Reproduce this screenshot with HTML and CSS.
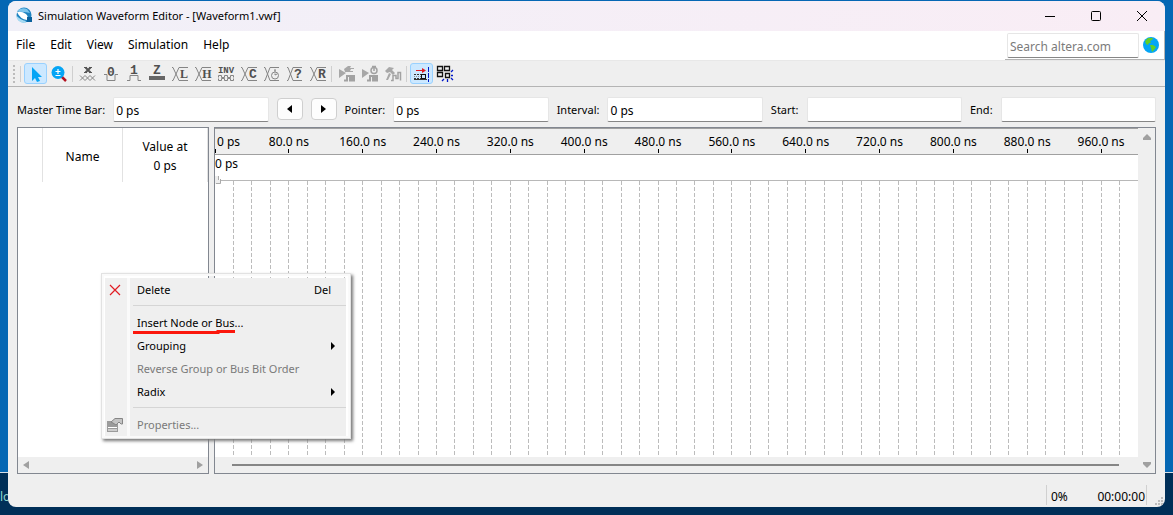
FILE: index.html
```html
<!DOCTYPE html>
<html lang="en">
<head>
<meta charset="utf-8">
<title>Simulation Waveform Editor</title>
<link rel="stylesheet" href="styles.css">
</head>
<body>
<div class="desktop-footer"><span class="desktop-label">lo</span></div>
<main class="window">
  <header class="titlebar">
    <svg class="app-icon" viewBox="0 0 18 18"><circle cx="9" cy="8" r="7.5" fill="#1d82c0"/><path d="M2 4 Q6 0 12 2 L15 6 Q11 5 8 5 Q4 5 2 4Z" fill="#7cc4ec"/><path d="M2 5 Q7 4 11 7 Q14 10 12 13 Q5 12 2 5Z" fill="#fff"/><path d="M1 8 Q5 13 11 14 L10 16 Q2 16 1 8Z" fill="#a6daf3"/><path d="M12 10 L17 10 L17 15 L12 15Z" fill="#0a619d"/></svg>
    <h1 class="title">Simulation Waveform Editor - [Waveform1.vwf]</h1>
    <button class="win-btn" aria-label="Minimize"><svg viewBox="0 0 12 12"><path d="M1 6.500H11"/></svg></button>
    <button class="win-btn" aria-label="Maximize"><svg viewBox="0 0 12 12"><rect x="1.500" y="1.500" width="9" height="9" rx="1"/></svg></button>
    <button class="win-btn" aria-label="Close"><svg viewBox="0 0 12 12"><path d="M1 1L11 11M11 1L1 11"/></svg></button>
  </header>

  <div class="menubar">
    <nav class="menus">
      <button>File</button><button>Edit</button><button>View</button><button>Simulation</button><button>Help</button>
    </nav>
    <div class="search">
      <input type="text" placeholder="Search altera.com" aria-label="Search altera.com">
      <svg class="globe" viewBox="0 0 16 16"><circle cx="8" cy="8" r="8" fill="#05a5f5"/><path d="M2 4 L5 1 L10 1 L9 3 L7 4 L8 6 L6 6 L5 8 L3 7Z" fill="#63cf25"/><path d="M7 8 L10 8 L13 10 L11 13 L9 15 L8 11Z" fill="#63cf25"/></svg>
    </div>
  </div>

  <div class="toolbar">
    <span class="grip"></span><span class="sep"></span>
    <button class="tool active" aria-label="Selection tool"><svg viewBox="0 0 16 16"><path d="M4 1 L14 11 L10 11 L12 15 L9 16 L7 12 L4 15Z" fill="#05a5f5"/></svg></button>
    <button class="tool" aria-label="Zoom tool"><svg viewBox="0 0 16 16"><path d="M10 10L15 15" stroke="#b41220" stroke-width="2.500"/><circle cx="7" cy="6.500" r="6.500" fill="#05a5f5"/><path d="M7 3V8M4.500 5.500H9.500M4.500 9.500H9.500" stroke="#fff" stroke-width="1.200"/></svg></button>
    <span class="sep"></span>
    <button class="tool" aria-label="Forcing unknown"><svg class="line" viewBox="0 0 16 16"><path class="bold" d="M5.500 1.500L10.500 6.500M10.500 1.500L5.500 6.500"/><path class="serif" d="M4 1.500H7M9 1.500H12M4 6.500H7M9 6.500H12"/><path d="M0 9.500L5 14.500L10 9.500L15 14.500M0 14.500L5 9.500L10 14.500L15 9.500"/></svg></button>
    <button class="tool" aria-label="Forcing low"><svg class="line" viewBox="0 0 16 16"><text x="8" y="10">0</text><path d="M1 8.500H4V14.500H12V8.500H15"/></svg></button>
    <button class="tool" aria-label="Forcing high"><svg class="line" viewBox="0 0 16 16"><text x="8" y="8">1</text><path d="M1 14.500H4V9.500H12V14.500H15"/></svg></button>
    <button class="tool" aria-label="High impedance"><svg class="line" viewBox="0 0 16 16"><text x="8" y="8">Z</text><rect class="solid" x="0" y="10" width="16" height="4"/></svg></button>
    <button class="tool" aria-label="Weak low"><svg class="line" viewBox="0 0 16 16"><path d="M0 1.500H1L7 14.500H16M0 14.500H1L7 1.500H16"/><text class="roman" x="12" y="12">L</text></svg></button>
    <button class="tool" aria-label="Weak high"><svg class="line" viewBox="0 0 16 16"><path d="M0 1.500H1L7 14.500H16M0 14.500H1L7 1.500H16"/><text class="roman" x="12" y="12">H</text></svg></button>
    <button class="tool" aria-label="Invert"><svg class="line" viewBox="0 0 16 16"><text class="small" x="8" y="7">INV</text><path d="M.5 11.500V9.500H3.500V11.500H6.500V9.500H9.500V11.500H12.500V9.500H15.500V11.500M.5 12.500V14.500H3.500V12.500H6.500V14.500H9.500V12.500H12.500V14.500H15.500V12.500"/></svg></button>
    <button class="tool" aria-label="Count value"><svg class="line" viewBox="0 0 16 16"><path d="M0 1.500H1L7 14.500H16M0 14.500H1L7 1.500H16"/><text x="12" y="12">C</text></svg></button>
    <button class="tool" aria-label="Overwrite clock"><svg class="line" viewBox="0 0 16 16"><path d="M0 1.500H1L6 14.500H15M0 14.500H1L6 1.500H15M10 4H12M11 4V6M11 9V7.500M11 9L13 8"/><circle cx="11" cy="9.500" r="3.500"/></svg></button>
    <button class="tool" aria-label="Arbitrary value"><svg class="line" viewBox="0 0 16 16"><path d="M0 1.500H1L6 14.500H15M0 14.500H1L6 1.500H15"/><text x="11" y="12">?</text></svg></button>
    <button class="tool" aria-label="Random values"><svg class="line" viewBox="0 0 16 16"><path d="M0 1.500H1L7 14.500H16M0 14.500H1L7 1.500H16"/><text x="12" y="12">R</text></svg></button>
    <span class="sep"></span>
    <button class="tool" aria-label="Run functional simulation" disabled><svg class="gray" viewBox="0 0 16 16"><path class="fill" d="M0 3L7 7L0 12ZM5 3L9 0H12L11 2H15V3H12L11 5H14V6H9L6 6Z"/><path d="M5 14.500H8V10H11V14.500H13V10H15V14.500H16"/></svg></button>
    <button class="tool" aria-label="Run timing simulation" disabled><svg class="gray" viewBox="0 0 16 16"><path class="fill" d="M0 3L7 7L0 12Z"/><circle class="thin" cx="12" cy="4.500" r="3"/><path class="thin" d="M10 .5H14M12 1V5"/><path d="M5 14.500H8V10H11V14.500H13V10H15V14.500H16"/></svg></button>
    <button class="tool" aria-label="Generate testbench" disabled><svg class="gray" viewBox="0 0 16 16"><path class="fill" d="M0 5L4 1L9 2L7 4L10 7L8 9L5 6L2 7ZM4 7L1 14H3L6 8Z"/><path class="thin" d="M6 14.500H8V9.500H11V12.500H13V6.500H15.500V14.500"/></svg></button>
    <span class="sep"></span>
    <button class="tool active" aria-label="Snap to transition"><svg viewBox="0 0 16 16" fill="none"><path d="M2 4.500H9" stroke="#e01b22"/><path d="M8 2L12 4.500L8 7Z" fill="#e01b22"/><rect x="7.500" y="8.500" width="4" height="4" stroke="#111"/><path d="M0 8.500H7M0 12.500H7" stroke="#333" stroke-dasharray="2 1"/><path d="M0 10.500H7" stroke="#888" stroke-dasharray="1 1"/><path d="M0 13.500H13" stroke="#333"/><path d="M14.500 1V16" stroke="#0018c8" stroke-dasharray="5 1"/></svg></button>
    <button class="tool" aria-label="Snap to grid"><svg viewBox="0 0 16 16" fill="none"><path d="M.5 .5H5.500V4.500H.5ZM7.500 .5H12.500V4.500H7.500ZM.5 6.500H5.500V10.500H.5ZM8.500 7.500H12.500V11.500H8.500Z" stroke="#111" stroke-width="1.300"/><path d="M14 6L16 4M14 9.500H16M14 12L16 14M10.500 13V16M7 13L5 15" stroke="#0018c8" stroke-width="1.300"/></svg></button>
  </div>

  <section class="timebar">
    <label for="master">Master Time Bar:</label><input id="master" type="text" value="0 ps">
    <button class="step" aria-label="Previous transition"><svg viewBox="0 0 5 8"><path d="M5 0V8L0 4Z"/></svg></button>
    <button class="step" aria-label="Next transition"><svg viewBox="0 0 5 8"><path d="M0 0V8L5 4Z"/></svg></button>
    <label for="pointer">Pointer:</label><input id="pointer" type="text" value="0 ps">
    <label for="interval">Interval:</label><input id="interval" type="text" value="0 ps">
    <label for="start">Start:</label><input id="start" type="text">
    <label for="end">End:</label><input id="end" type="text">
  </section>

  <section class="workspace">
    <div class="nodes">
      <div class="node-head"><span></span><span>Name</span><span>Value at<br>0 ps</span></div>
      <div class="node-body"></div>
      <div class="hscroll"><svg viewBox="0 0 6 8"><path d="M6 0V8L0 4Z"/></svg><svg viewBox="0 0 6 8"><path d="M0 0V8L6 4Z"/></svg></div>
    </div>
    <div class="wave">
      <div class="plot">
        <div class="ruler" id="ruler"><span class="tick first">0 ps</span></div>
        <div class="cursor-row">0 ps</div>
        <div class="grid"><svg class="grid-lines" id="grid" width="100%" height="100%"></svg><svg class="marker" viewBox="0 0 6 8"><path d="M0 0H3V4H6V8H0Z" fill="#eee"/><path d="M3.500 0V4M5.500 3V7.500H1" fill="none" stroke="#aaa"/></svg></div>
        <div class="track"><span></span></div>
      </div>
      <div class="vscroll"><svg viewBox="0 0 8 6"><path d="M0 6V4L4 0L8 4V6Z"/></svg><svg viewBox="0 0 8 6"><path d="M0 0H8V2L4 6L0 2Z"/></svg></div>
    </div>
  </section>

  <footer class="status"><div class="progress"><span>0%</span><span>00:00:00</span></div>
    <svg class="resize" viewBox="0 0 8 8"><path d="M6 0H8V2H6ZM3 3H5V5H3ZM6 3H8V5H6ZM0 6H2V8H0ZM3 6H5V8H3ZM6 6H8V8H6Z"/></svg></footer>
</main>

<div class="context" role="menu">
  <button role="menuitem"><svg class="cross" viewBox="0 0 12 12"><path d="M1 1L11 11M11 1L1 11"/></svg><span class="name">Delete</span><span class="key">Del</span></button>
  <hr>
  <button role="menuitem"><span class="name">Insert Node or Bus...</span><svg class="underline" viewBox="0 0 102 4"><path d="M0 2.500H85V1.500H102"/></svg></button>
  <button role="menuitem"><span class="name">Grouping</span><svg class="arrow" viewBox="0 0 4 8"><path d="M0 0V8L4 4Z"/></svg></button>
  <button role="menuitem" disabled><span class="name">Reverse Group or Bus Bit Order</span></button>
  <button role="menuitem"><span class="name">Radix</span><svg class="arrow" viewBox="0 0 4 8"><path d="M0 0V8L4 4Z"/></svg></button>
  <hr>
  <button role="menuitem" disabled><svg class="props" viewBox="0 0 16 14"><path d="M0 3H11V14H0Z" fill="#9b9b9b"/><path d="M1 9.500H10M1 12H10" stroke="#fff"/><path d="M4 4L8 .5H15.500V6H14L12 4L9 7L6 5Z" fill="#c4c4c4" stroke="#858585"/></svg><span class="name">Properties...</span></button>
</div>
<script src="ruler.js"></script>
</body>
</html>
```
FILE: styles.css
```css
* { box-sizing: border-box; }
body {
  margin: 0;
  min-height: 100vh;
  padding: 1px 8px 8px;
  display: flex;
  background: #0567b4;
  color: #000;
  font: 12px/18px "Noto Sans", "Open Sans", sans-serif;
}
button, input { font: inherit; color: inherit; }
button { border: 0; background: none; padding: 0; }
svg { display: block; flex: none; }

.desktop-footer {
  position: absolute;
  inset: auto 0 0;
  height: 43px;
  padding-top: 15px;
  border-top: 1px solid #d5dfe8;
  background: #002f58;
}
.desktop-label { color: #8fd5cf; }

.window {
  position: relative;
  flex: 1;
  min-width: 0;
  display: flex;
  flex-direction: column;
  overflow: hidden;
  border-radius: 8px;
  background: #efefef;
}
.titlebar {
  display: flex;
  align-items: center;
  height: 30px;
  padding-left: 7px;
  background: linear-gradient(90deg, #f1f0f8, #f9edf5);
}
.app-icon { width: 18px; height: 18px; }
.title { flex: 1; margin: 0 0 0 5px; font-size: 11px; font-weight: 400; }
.win-btn { width: 46px; height: 30px; display: grid; place-items: center; }
.win-btn svg { width: 12px; height: 12px; fill: none; stroke: #000; }

.menubar {
  display: flex;
  justify-content: space-between;
  height: 29px;
  background: #fff;
}
.menus { display: flex; gap: 15px; padding-left: 8px; height: 27px; }
.search {
  display: flex;
  align-items: center;
  gap: 4px;
  padding: 0 5px 0 2px;
  border-bottom: 1px solid #b4b4b4;
  border-right: 1px solid #b4b4b4;
}
input {
  min-width: 0;
  height: 25px;
  padding: 3px 2px 1px;
  border: 1px solid #e6e6e6;
  border-bottom-color: #868686;
  border-radius: 2px;
  background: #fff;
}
.search input { width: 132px; }
.search input::placeholder { color: #7b7b7b; opacity: 1; }
.globe { width: 16px; height: 16px; }

.toolbar {
  display: flex;
  align-items: center;
  height: 27px;
  padding-left: 5px;
  border-top: 1px solid #e8e8e8;
  border-bottom: 1px solid #b4b4b4;
}
.grip {
  width: 5px;
  height: 18px;
  background: repeating-linear-gradient(#bcbcbc 0 2px, transparent 2px 4px) 0 0 / 2px 100% no-repeat;
}
.sep { width: 6px; height: 16px; background: linear-gradient(#cfcfcf, #cfcfcf) 2px 0 / 1px 100% no-repeat; }
.tool {
  width: 23px;
  height: 21px;
  display: grid;
  place-items: center;
  border: 1px solid transparent;
  border-radius: 3px;
}
.tool.active { background: #cce8ff; border-color: #99d1ff; }
.tool svg { width: 16px; height: 16px; overflow: visible; }
.line { fill: none; stroke: #858585; }
.line .bold { stroke: #555; stroke-width: 2; }
.line .serif { stroke: #555; }
.line .solid { fill: #666; stroke: none; }
.line text {
  fill: #505050;
  stroke: none;
  text-anchor: middle;
  font: bold 13px "Liberation Mono", monospace;
}
.line .roman { font: bold 12px "Liberation Serif", serif; }
.line .small { font-size: 9px; }
.gray { fill: none; stroke: #a2a2a2; stroke-width: 2; }
.gray .fill { fill: #a8a8a8; stroke: none; }
.gray .thin { stroke-width: 1.5; }

.timebar {
  display: flex;
  align-items: center;
  gap: 8px;
  height: 40px;
  padding: 4px 9px 0;
}
.timebar label { font-size: 11px; padding-top: 2px; }
.timebar input { flex: 1 1 0; }
.step {
  width: 26px;
  height: 22px;
  display: grid;
  place-items: center;
  border: 1px solid #cfcfcf;
  border-radius: 4px;
  background: #fdfdfd;
}
.step svg { width: 5px; height: 8px; }

.workspace { flex: 1; display: flex; gap: 5px; padding: 0 9px; min-height: 300px; }
.nodes, .wave { border: 1px solid #828790; background: #fff; }
.nodes { width: 192px; display: flex; flex-direction: column; }
.node-head {
  display: grid;
  grid-template-columns: 25px 80px 1fr;
  height: 54px;
  line-height: 19px;
  text-align: center;
}
.node-head span { display: grid; place-items: center; border-right: 1px solid #e2e2e2; padding-top: 2px; }
.node-head span:last-child { display: block; padding-top: 9px; }
.node-body { flex: 1; }
.hscroll {
  display: flex;
  align-items: center;
  justify-content: space-between;
  height: 16px;
  padding: 0 5px;
  background: #efefef;
}
.hscroll svg { width: 6px; height: 8px; fill: #a0a0a0; }

.wave { flex: 1; min-width: 0; display: flex; }
.plot { flex: 1; min-width: 0; display: flex; flex-direction: column; }
.ruler {
  display: grid;
  grid-template-columns: 4fr repeat(12, 8fr);
  height: 27px;
  border-top: 1px solid #a0a0a0;
  border-bottom: 1px solid #a0a0a0;
  background: #efefef;
}
.tick {
  min-width: 0;
  padding-top: 4px;
  text-align: center;
  white-space: nowrap;
  background: linear-gradient(#000, #000) 50% 20px / 1px 4px no-repeat;
}
.tick.first { padding-left: 2px; text-align: left; background-position: 0 20px; }
.cursor-row { height: 26px; border-bottom: 1px solid #b8b8b8; }
.grid { position: relative; flex: 1; min-height: 0; }
.grid-lines { position: absolute; inset: 0; stroke: #bcbcbc; stroke-dasharray: 4 2; shape-rendering: crispEdges; }
.marker { position: absolute; left: 0; top: -5px; width: 6px; height: 8px; }
.track { height: 16px; display: flex; align-items: center; padding: 0 19px 0 17px; background: #efefef; }
.track span { flex: 1; height: 2px; background: #868686; }
.vscroll {
  width: 17px;
  display: flex;
  flex-direction: column;
  align-items: center;
  justify-content: space-between;
  padding: 6px 0 5px;
  background: #efefef;
}
.vscroll svg { width: 8px; height: 6px; fill: #a0a0a0; }

.status { display: flex; justify-content: flex-end; height: 33px; padding: 11px 2px 2px; gap: 8px; }
.progress {
  width: 101px;
  display: flex;
  justify-content: space-between;
  padding: 3px 1px 0 4px;
  border: 0 solid #d0d0d0;
  border-width: 0 1px;
}
.resize { width: 8px; height: 8px; align-self: flex-end; fill: #bdbdbd; }

.context {
  position: absolute;
  left: 101px;
  top: 273px;
  width: 250px;
  padding: 4px 4px 2px 3px;
  border: 1px solid #e2e2e2;
  background: linear-gradient(90deg, #f0f0f0 25px, #fafafa 25px 28px, #efefef 28px);
  background-clip: content-box, border-box;
  box-shadow: inset 0 0 0 2px #fafafa, 2px 2px 3px #777;
  background-color: #efefef;
  font-size: 11px;
}
.context button {
  position: relative;
  display: flex;
  align-items: center;
  justify-content: space-between;
  width: 100%;
  height: 23px;
  padding: 0 15px 0 32px;
}
.context button:disabled { color: #7a7a7a; }
.context hr { height: 1px; margin: 4px 0 5px 28px; border: 0; background: #d5d5d5; }
.context .arrow { width: 4px; height: 8px; margin-right: -4px; }
.cross, .props { position: absolute; left: 4px; }
.cross { width: 12px; height: 12px; fill: none; stroke: #e11b22; stroke-width: 1.2; }
.props { width: 16px; height: 14px; left: 2px; }
.underline { position: absolute; left: 28px; bottom: 0; width: 102px; height: 4px; fill: none; stroke: #fb170c; stroke-width: 3; }
```
FILE: ruler.js
```js
const ruler = document.getElementById('ruler');
for (let t = 80; t <= 960; t += 80) {
  const tick = document.createElement('span');
  tick.className = 'tick';
  tick.textContent = t.toFixed(1) + ' ns';
  ruler.append(tick);
}
const grid = document.getElementById('grid');
for (let p = 2; p < 100; p += 2) {
  const line = document.createElementNS('http://www.w3.org/2000/svg', 'line');
  line.setAttribute('x1', p + '%');
  line.setAttribute('x2', p + '%');
  line.setAttribute('y1', '0');
  line.setAttribute('y2', '100%');
  grid.append(line);
}
```
